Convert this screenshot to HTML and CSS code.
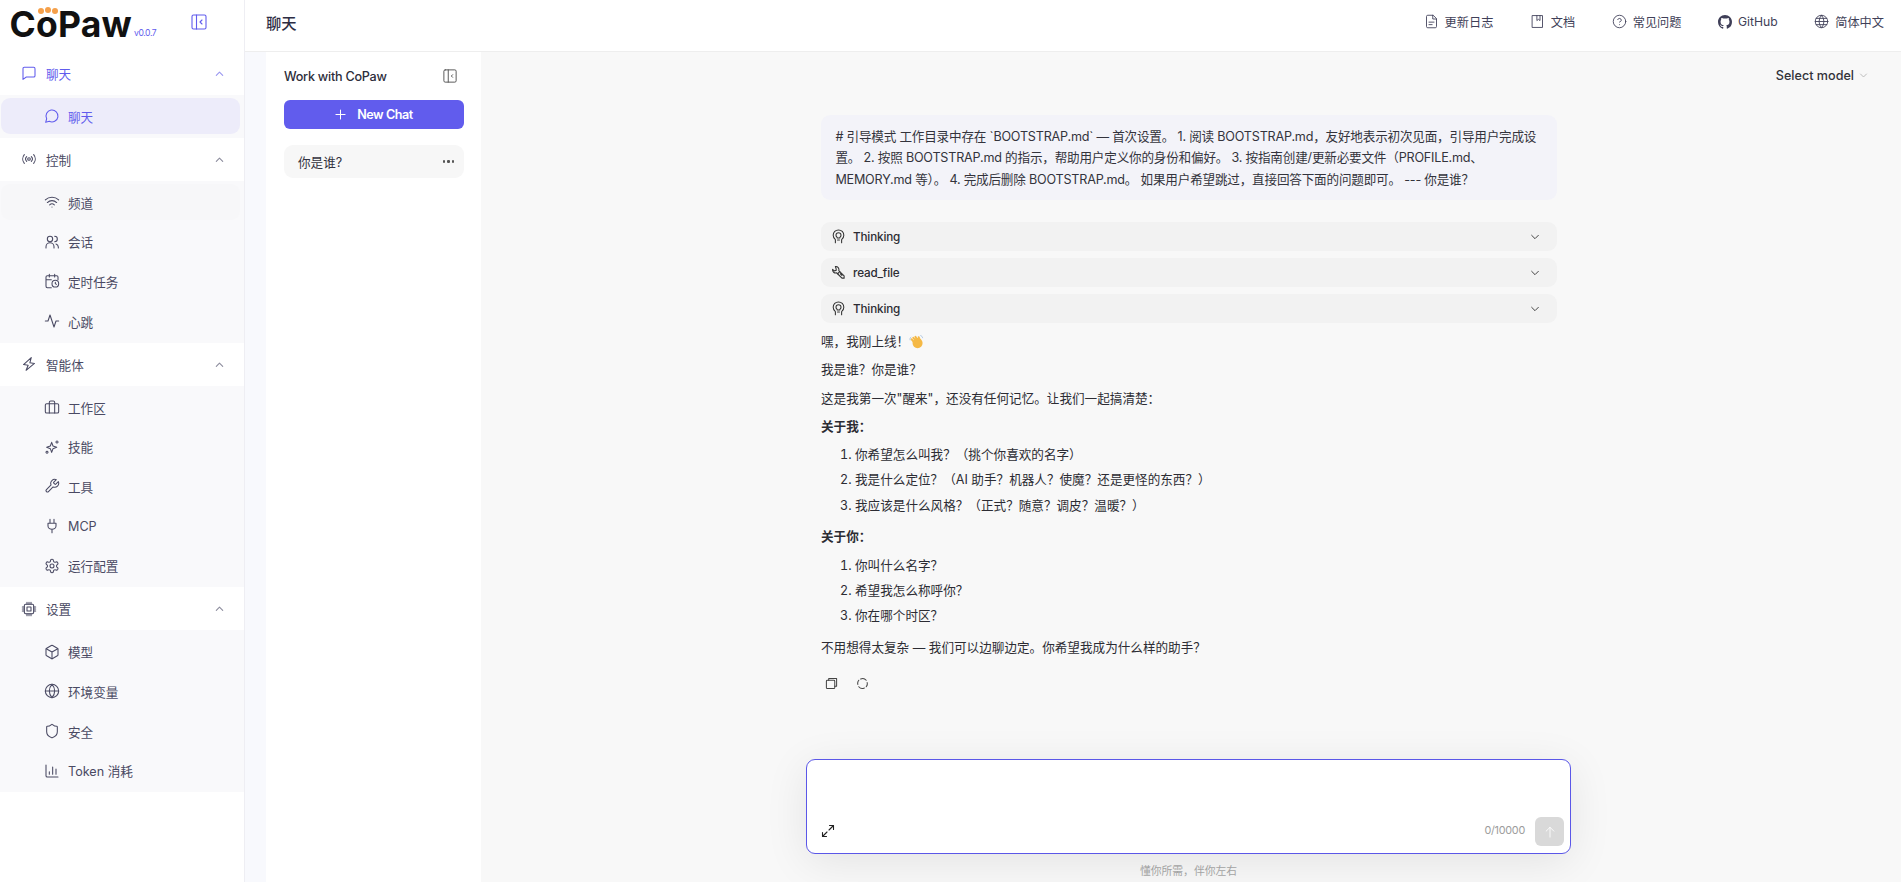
FILE: index.html
```html
<!DOCTYPE html>
<html lang="zh-CN">
<head>
    <meta charset="UTF-8">
    <meta name="viewport" content="width=device-width, initial-scale=1.0">
    <title>CoPaw</title>
    <link rel="stylesheet" href="styles.css">
</head>
<body>
    <div class="app">
        <aside class="sidebar">
            <div class="brand">
                <div class="logo">
                    <span class="logo-text">CoPaw</span>
                    <span class="paw"><i></i><i></i><i></i></span>
                </div>
                <span class="version">v0.0.7</span>
                <svg class="brand-toggle" viewBox="0 0 16 16"><rect x="1" y="1" width="14" height="14" rx="1.5"/><path d="M5.500 1v14M11 6 9 8l2 2"/></svg>
            </div>

            <div class="nav-head active">
                <svg class="ico" viewBox="0 0 24 24"><path d="M3 5.500A2 2 0 0 1 5 3.500h14a2 2 0 0 1 2 2V16a2 2 0 0 1-2 2H8l-5 3.500z"/></svg>
                <span>聊天</span>
                <svg class="chev" viewBox="0 0 12 12"><path d="M2.500 8 6 4.500 9.500 8"/></svg>
            </div>
            <div class="nav-list">
                <div class="nav-item selected">
                    <svg class="ico" viewBox="0 0 24 24"><path d="M7.900 20A9 9 0 1 0 4 16.100L2.500 21.500z"/></svg>
                    <span>聊天</span>
                </div>
            </div>

            <div class="nav-head">
                <svg class="ico" viewBox="0 0 24 24"><circle cx="12" cy="12" r="2"/><path d="M8.500 8.500a5 5 0 0 0 0 7M15.500 8.500a5 5 0 0 1 0 7M5 5.500a10 10 0 0 0 0 13M19 5.500a10 10 0 0 1 0 13"/></svg>
                <span>控制</span>
                <svg class="chev" viewBox="0 0 12 12"><path d="M2.500 8 6 4.500 9.500 8"/></svg>
            </div>
            <div class="nav-list">
                <div class="nav-item hovered">
                    <svg class="ico" viewBox="0 0 24 24"><path d="M12 19.500h.01M2 8.800a15 15 0 0 1 20 0M5 12.800a10 10 0 0 1 14 0M8.500 16.300a5 5 0 0 1 7 0"/></svg>
                    <span>频道</span>
                </div>
                <div class="nav-item">
                    <svg class="ico" viewBox="0 0 24 24"><circle cx="9" cy="7.500" r="4"/><path d="M3 21v-2a6 6 0 0 1 12 0v2M16 3.500a4 4 0 0 1 0 8M18 15a5 5 0 0 1 3.500 4.500V21"/></svg>
                    <span>会话</span>
                </div>
                <div class="nav-item">
                    <svg class="ico" viewBox="0 0 24 24"><path d="M21 10V6a2 2 0 0 0-2-2H5a2 2 0 0 0-2 2v14a2 2 0 0 0 2 2h6M8 2v4M16 2v4M3 10h8"/><circle cx="17" cy="16" r="5"/><path d="M17 14v2l1.500 1"/></svg>
                    <span>定时任务</span>
                </div>
                <div class="nav-item">
                    <svg class="ico" viewBox="0 0 24 24"><path d="M2 12h4l3-9 6 18 3-9h4"/></svg>
                    <span>心跳</span>
                </div>
            </div>

            <div class="nav-head">
                <svg class="ico" viewBox="0 0 24 24"><path d="M14 2 4 14h7l-2 8 11-12h-7l1-8z" transform="rotate(8 12 12)"/></svg>
                <span>智能体</span>
                <svg class="chev" viewBox="0 0 12 12"><path d="M2.500 8 6 4.500 9.500 8"/></svg>
            </div>
            <div class="nav-list">
                <div class="nav-item">
                    <svg class="ico" viewBox="0 0 24 24"><rect x="2" y="7" width="20" height="14" rx="2"/><path d="M8 21V5a2 2 0 0 1 2-2h4a2 2 0 0 1 2 2v16"/></svg>
                    <span>工作区</span>
                </div>
                <div class="nav-item">
                    <svg class="ico" viewBox="0 0 24 24"><path d="M11.500 5l2 5.500 5.500 2-5.500 2-2 5.500-2-5.500-5.500-2 5.500-2z"/><path d="M19.500 2.500v4M17.500 4.500h4M4.500 18.500a1.500 1.500 0 1 0 .01 0"/></svg>
                    <span>技能</span>
                </div>
                <div class="nav-item">
                    <svg class="ico" viewBox="0 0 24 24"><path d="M14.700 6.300a1 1 0 0 0 0 1.400l1.600 1.600a1 1 0 0 0 1.400 0l3.800-3.800a6 6 0 0 1-7.900 7.900l-6.900 6.900a2.100 2.100 0 0 1-3-3l6.900-6.900a6 6 0 0 1 7.900-7.900z"/></svg>
                    <span>工具</span>
                </div>
                <div class="nav-item">
                    <svg class="ico" viewBox="0 0 24 24"><path d="M9 2v6M15 2v6M12 17v5M6 8h12v4a6 5 0 0 1-12 0z"/></svg>
                    <span>MCP</span>
                </div>
                <div class="nav-item">
                    <svg class="ico" viewBox="0 0 24 24"><path d="M12.200 2h-.4a2 2 0 0 0-2 2v.2a2 2 0 0 1-1 1.700l-.4.300a2 2 0 0 1-2 0l-.2-.1a2 2 0 0 0-2.700.7l-.2.400a2 2 0 0 0 .7 2.700l.2.100a2 2 0 0 1 1 1.700v.6a2 2 0 0 1-1 1.700l-.2.100a2 2 0 0 0-.7 2.700l.2.400a2 2 0 0 0 2.700.7l.2-.1a2 2 0 0 1 2 0l.4.300a2 2 0 0 1 1 1.700v.2a2 2 0 0 0 2 2h.4a2 2 0 0 0 2-2v-.2a2 2 0 0 1 1-1.700l.4-.3a2 2 0 0 1 2 0l.2.100a2 2 0 0 0 2.700-.7l.2-.4a2 2 0 0 0-.7-2.700l-.2-.1a2 2 0 0 1-1-1.700v-.6a2 2 0 0 1 1-1.700l.2-.1a2 2 0 0 0 .7-2.700l-.2-.4a2 2 0 0 0-2.700-.7l-.2.100a2 2 0 0 1-2 0l-.4-.3a2 2 0 0 1-1-1.700V4a2 2 0 0 0-2-2z"/><circle cx="12" cy="12" r="3"/></svg>
                    <span>运行配置</span>
                </div>
            </div>

            <div class="nav-head">
                <svg class="ico" viewBox="0 0 24 24"><rect x="5" y="5" width="14" height="14" rx="2"/><rect x="9" y="9" width="6" height="6"/><path d="M9 2v3M15 2v3M9 19v3M15 19v3M2 9h3M2 15h3M19 9h3M19 15h3M12 2v3M12 19v3M2 12h3M19 12h3"/></svg>
                <span>设置</span>
                <svg class="chev" viewBox="0 0 12 12"><path d="M2.500 8 6 4.500 9.500 8"/></svg>
            </div>
            <div class="nav-list">
                <div class="nav-item">
                    <svg class="ico" viewBox="0 0 24 24"><path d="M21 8a2 2 0 0 0-1-1.700l-7-4a2 2 0 0 0-2 0l-7 4A2 2 0 0 0 3 8v8a2 2 0 0 0 1 1.700l7 4a2 2 0 0 0 2 0l7-4a2 2 0 0 0 1-1.700z"/><path d="M3.300 7 12 12l8.700-5M12 22V12"/></svg>
                    <span>模型</span>
                </div>
                <div class="nav-item">
                    <svg class="ico" viewBox="0 0 24 24"><circle cx="12" cy="12" r="10"/><path d="M2 12h20M12 2a14.500 14.500 0 0 0 0 20 14.500 14.500 0 0 0 0-20"/></svg>
                    <span>环境变量</span>
                </div>
                <div class="nav-item">
                    <svg class="ico" viewBox="0 0 24 24"><path d="M20 13c0 5-3.500 7.500-7.700 9a1 1 0 0 1-.6 0C7.500 20.500 4 18 4 13V6a1 1 0 0 1 1-1c2 0 4.500-1.200 6.200-2.700a1.200 1.200 0 0 1 1.600 0C14.500 3.800 17 5 19 5a1 1 0 0 1 1 1z"/></svg>
                    <span>安全</span>
                </div>
                <div class="nav-item">
                    <svg class="ico" viewBox="0 0 24 24"><path d="M3 3v16a2 2 0 0 0 2 2h16M8 17v-4M13 17V6M18 17V9"/></svg>
                    <span>Token 消耗</span>
                </div>
            </div>
        </aside>

        <div class="page">
            <header class="topbar">
                <div class="page-title">聊天</div>
                <nav class="top-links">
                    <a class="top-link">
                        <svg class="top-ico" viewBox="0 0 24 24"><path d="M14 2H6a2 2 0 0 0-2 2v16a2 2 0 0 0 2 2h12a2 2 0 0 0 2-2V8zM14 2v6h6M8 13h8M8 17h5"/></svg>
                        <span>更新日志</span>
                    </a>
                    <a class="top-link">
                        <svg class="top-ico" viewBox="0 0 24 24"><path d="M4 2.500h16v19H4zM11 2.500v8l2.500-2 2.500 2v-8"/></svg>
                        <span>文档</span>
                    </a>
                    <a class="top-link">
                        <svg class="top-ico" viewBox="0 0 24 24"><circle cx="12" cy="12" r="10"/><path d="M9.100 9a3 3 0 0 1 5.800 1c0 2-3 3-3 3M12 17h.01"/></svg>
                        <span>常见问题</span>
                    </a>
                    <a class="top-link">
                        <svg class="top-ico solid" viewBox="0 0 16 16"><path d="M8 0C3.580 0 0 3.580 0 8c0 3.540 2.290 6.530 5.470 7.590.4.070.55-.17.55-.38 0-.19-.01-.82-.01-1.490-2.010.37-2.530-.49-2.690-.94-.09-.23-.48-.94-.82-1.130-.28-.15-.68-.52-.01-.53.630-.01 1.080.58 1.230.82.720 1.210 1.870.870 2.330.660.070-.520.280-.870.510-1.070-1.780-.200-3.640-.890-3.640-3.950 0-.870.310-1.590.820-2.150-.080-.200-.360-1.020.080-2.120 0 0 .670-.210 2.200.820.640-.180 1.320-.270 2-.270s1.360.090 2 .270c1.530-1.040 2.200-.820 2.200-.820.440 1.100.160 1.920.080 2.120.510.560.820 1.270.820 2.150 0 3.070-1.870 3.750-3.650 3.950.290.250.540.730.540 1.480 0 1.070-.010 1.930-.010 2.200 0 .210.150.460.550.380A8.010 8.010 0 0 0 16 8c0-4.420-3.580-8-8-8z"/></svg>
                        <span>GitHub</span>
                    </a>
                    <a class="top-link">
                        <svg class="top-ico" viewBox="0 0 24 24"><circle cx="12" cy="12" r="10"/><path d="M2 12h20M3.500 7h17M3.500 17h17M12 2a14.500 14.500 0 0 0 0 20 14.500 14.500 0 0 0 0-20"/></svg>
                        <span>简体中文</span>
                    </a>
                </nav>
            </header>

            <div class="content">
                <section class="sessions">
                    <div class="sessions-head">
                        <span>Work with CoPaw</span>
                        <svg class="sessions-toggle" viewBox="0 0 16 16"><rect x="1" y="1" width="14" height="14" rx="1.500"/><path d="M6 1v14M11 6.500 9.500 8l1.500 1.500"/></svg>
                    </div>
                    <button class="new-chat">
                        <svg viewBox="0 0 12 12"><path d="M6 1v10M1 6h10"/></svg>
                        <span>New Chat</span>
                    </button>
                    <div class="session-item">
                        <span>你是谁?</span>
                        <span class="dots"><i></i><i></i><i></i></span>
                    </div>
                </section>

                <main class="chat">
                    <div class="model-select">
                        <span>Select model</span>
                        <svg viewBox="0 0 12 12"><path d="M2 4l4 4 4-4"/></svg>
                    </div>

                    <div class="thread">
                        <div class="user-msg"># 引导模式 工作目录中存在 `BOOTSTRAP.md` — 首次设置。 1. 阅读 BOOTSTRAP.md，友好地表示初次见面，引导用户完成设置。 2. 按照 BOOTSTRAP.md 的指示，帮助用户定义你的身份和偏好。 3. 按指南创建/更新必要文件（PROFILE.md、MEMORY.md 等）。 4. 完成后删除 BOOTSTRAP.md。 如果用户希望跳过，直接回答下面的问题即可。 --- 你是谁？</div>

                        <div class="fold">
                            <svg class="fold-ico" viewBox="0 0 24 24"><path d="M7 22v-5C4.500 15 3.500 12.500 3.500 10a8.500 8.500 0 0 1 17 0c0 3-1.500 5.500-3.500 7v5"/><path d="M9.500 13a4 4 0 1 1 5 0c-.5.500-.5 1-.5 1.500h-4c0-.5 0-1-.5-1.500zM10.500 17.500h3"/></svg>
                            <span>Thinking</span>
                            <svg class="fold-chev" viewBox="0 0 12 12"><path d="M2 4l4 4 4-4"/></svg>
                        </div>
                        <div class="fold">
                            <svg class="fold-ico" viewBox="0 0 24 24"><path d="M7 2.500a5 5 0 0 1 5.500 6.500l1.500 1.500-3.500 3.500L9 12.500A5 5 0 0 1 2.500 7l3 2.500 3-1-.5-3z"/><path d="M14 10.500l7 7v3.500h-3.500l-7-7M15 14l2.500 2.500"/></svg>
                            <span>read_file</span>
                            <svg class="fold-chev" viewBox="0 0 12 12"><path d="M2 4l4 4 4-4"/></svg>
                        </div>
                        <div class="fold">
                            <svg class="fold-ico" viewBox="0 0 24 24"><path d="M7 22v-5C4.500 15 3.500 12.500 3.500 10a8.500 8.500 0 0 1 17 0c0 3-1.500 5.500-3.500 7v5"/><path d="M9.500 13a4 4 0 1 1 5 0c-.5.500-.5 1-.5 1.500h-4c0-.5 0-1-.5-1.500zM10.500 17.500h3"/></svg>
                            <span>Thinking</span>
                            <svg class="fold-chev" viewBox="0 0 12 12"><path d="M2 4l4 4 4-4"/></svg>
                        </div>

                        <div class="answer">
                            <p>嘿，我刚上线！<svg class="wave" viewBox="0 0 14 14"><g class="wave-hand"><circle cx="8" cy="8.500" r="3.800"/><path d="M5 8 2.500 5M6.500 6.500 4 3.500M8 5.500 6 2.500M10 5.500 9 3"/></g><path class="wave-line" d="M1 5.500C.8 4.500 1 3.500 1.700 3M11 1.500c.8.300 1.500 1 1.700 2"/></svg></p>
                            <p>我是谁？你是谁？</p>
                            <p>这是我第一次"醒来"，还没有任何记忆。让我们一起搞清楚：</p>
                            <p><strong>关于我：</strong></p>
                            <ol>
                                <li>你希望怎么叫我？（挑个你喜欢的名字）</li>
                                <li>我是什么定位？（AI 助手？机器人？使魔？还是更怪的东西？）</li>
                                <li>我应该是什么风格？（正式？随意？调皮？温暖？）</li>
                            </ol>
                            <p><strong>关于你：</strong></p>
                            <ol>
                                <li>你叫什么名字？</li>
                                <li>希望我怎么称呼你？</li>
                                <li>你在哪个时区？</li>
                            </ol>
                            <p>不用想得太复杂 — 我们可以边聊边定。你希望我成为什么样的助手？</p>
                        </div>

                        <div class="msg-actions">
                            <svg viewBox="0 0 14 14"><rect x="1.500" y="3.500" width="9" height="9" rx="1"/><path d="M4 3.500V1.500h8.500v8.500h-2"/></svg>
                            <svg viewBox="0 0 14 14"><path d="M2 8a5 5 0 0 1 1-4.500M5 2.200a5 5 0 0 1 6 1.300M12 6a5 5 0 0 1-1 4.500M9 11.800a5 5 0 0 1-6-1.300"/></svg>
                        </div>
                    </div>

                    <div class="composer-wrap">
                        <div class="composer">
                            <svg class="expand" viewBox="0 0 14 14"><path d="M8 6l4.500-4.500M8.500 1.500h4v4M6 8l-4.500 4.500M1.500 8.500v4h4"/></svg>
                            <span class="counter">0/10000</span>
                            <button class="send">
                                <svg viewBox="0 0 14 14"><path d="M7 13V1.500M2.500 6 7 1.500 11.500 6"/></svg>
                            </button>
                        </div>
                        <div class="tagline">懂你所需，伴你左右</div>
                    </div>
                </main>
            </div>
        </div>
    </div>
</body>
</html>
```

FILE: styles.css
```css
* {
    box-sizing: border-box;
}
body {
    margin: 0;
    font-family: Inter, "Noto Sans CJK SC", sans-serif;
    font-size: 12.6px;
    color: #1f1f33;
    background-color: #fff;
}
svg {
    fill: none;
    stroke: currentColor;
    stroke-linecap: round;
    stroke-linejoin: round;
    flex-shrink: 0;
}
.app {
    display: flex;
    height: 882px;
    overflow: hidden;
}

/* sidebar */
.sidebar {
    width: 245px;
    flex-shrink: 0;
    border-right: 1px solid #eeeef3;
    background-color: #fff;
}
.brand {
    position: relative;
    height: 51.5px;
}
.logo {
    position: absolute;
    left: 9.500px;
    top: 2px;
}
.logo-text {
    font-family: Inter, sans-serif;
    font-size: 35.5px;
    font-weight: 700;
    letter-spacing: .2px;
    line-height: 46px;
    color: #111;
}
.paw {
    position: absolute;
    left: 28.500px;
    top: 6px;
    display: flex;
    gap: 1px;
}
.paw i {
    width: 6px;
    height: 6px;
    border-radius: 50%;
    background-color: #f5a04a;
}
.paw i:nth-child(2) {
    margin-top: -1.5px;
}
.version {
    position: absolute;
    left: 134px;
    top: 28px;
    font-size: 8.6px;
    letter-spacing: -.4px;
    color: #615ced;
}
.brand-toggle {
    position: absolute;
    left: 190.500px;
    top: 14px;
    width: 16px;
    height: 16px;
    stroke: #615ced;
    stroke-width: 1.1;
}
.nav-head {
    display: flex;
    align-items: center;
    height: 43px;
    padding: 0 19px 0 21px;
    color: #4a4a63;
}
.nav-head .ico {
    margin-right: 9px;
}
.nav-head span {
    flex: 1;
}
.nav-head.active {
    color: #615ced;
}
.chev {
    width: 11px;
    height: 11px;
    stroke: #8d8d9e;
    stroke-width: 1.2;
}
.nav-head.active .chev {
    stroke: #9a97f0;
}
.ico {
    width: 16px;
    height: 16px;
    stroke-width: 1.6;
}
.nav-list {
    display: flex;
    flex-direction: column;
    gap: 3.6px;
    padding: 3.6px 4px 3.6px 1px;
    background-color: #f9f9fb;
}
.nav-item {
    display: flex;
    align-items: center;
    gap: 8px;
    height: 36px;
    padding-left: 43px;
    border-radius: 9px;
    color: #4a4a63;
}
.nav-item.selected {
    background-color: #edecfa;
    color: #615ced;
}
.nav-item.hovered {
    background-color: #f7f7f9;
}

/* top bar */
.page {
    flex: 1;
    display: flex;
    flex-direction: column;
    min-width: 0;
}
.topbar {
    display: flex;
    align-items: center;
    justify-content: space-between;
    height: 52px;
    flex-shrink: 0;
    padding: 0 17px 8px 21px;
    border-bottom: 1px solid #eeeeee;
    background-color: #fff;
}
.page-title {
    font-size: 15.3px;
    font-weight: 500;
    color: #2d2d44;
}
.top-links {
    display: flex;
    gap: 36.5px;
}
.top-link {
    display: flex;
    align-items: center;
    gap: 6px;
    font-size: 12.2px;
    color: #3f3f58;
}
.top-ico {
    width: 15px;
    height: 15px;
    stroke-width: 1.4;
}
.top-ico.solid {
    width: 14px;
    height: 14px;
    fill: currentColor;
    stroke: none;
}

/* session list */
.content {
    flex: 1;
    display: flex;
    min-height: 0;
    padding-left: 21px;
    background-color: #f8f9fd;
}
.sessions {
    width: 215px;
    flex-shrink: 0;
    padding: 0 17px 0 18px;
    background-color: #fff;
}
.sessions-head {
    display: flex;
    align-items: center;
    justify-content: space-between;
    height: 48px;
    font-weight: 500;
    letter-spacing: -.25px;
    color: #2d2d3a;
}
.sessions-toggle {
    width: 14px;
    height: 14px;
    margin-right: 7px;
    stroke: #555;
    stroke-width: 1.1;
}
.new-chat {
    display: flex;
    align-items: center;
    justify-content: center;
    gap: 11px;
    width: 100%;
    height: 29px;
    border: 0;
    border-radius: 6px;
    background-color: #615ced;
    color: #fff;
    font-family: inherit;
    font-size: 12.6px;
    font-weight: 600;
    letter-spacing: -.45px;
}
.new-chat svg {
    width: 11px;
    height: 11px;
    stroke-width: 1.1;
}
.session-item {
    display: flex;
    align-items: center;
    justify-content: space-between;
    height: 33px;
    margin-top: 16px;
    padding: 0 10px 0 14px;
    border-radius: 9px;
    background-color: #f7f7f7;
    color: #33333f;
}
.dots {
    display: flex;
    gap: 2.3px;
}
.dots i {
    width: 2.2px;
    height: 2.2px;
    border-radius: 50%;
    background-color: #555;
}

/* chat area */
.chat {
    position: relative;
    flex: 1;
    min-width: 0;
    background-color: #f8f8f8;
}
.model-select {
    position: absolute;
    top: 16px;
    right: 33px;
    display: flex;
    align-items: center;
    gap: 5px;
    font-weight: 500;
    color: #33333a;
}
.model-select svg {
    width: 9px;
    height: 9px;
    stroke: #aaa;
}
.thread {
    width: 736px;
    margin-left: 340px;
    padding-top: 63px;
    color: #2c2c33;
}
.user-msg {
    height: 85px;
    padding: 11px 14.4px;
    margin-bottom: 22px;
    border-radius: 9px;
    background-color: #f3f3f9;
    line-height: 21.4px;
    letter-spacing: -.2px;
    color: #33333c;
}
.fold {
    display: flex;
    align-items: center;
    height: 29px;
    margin-bottom: 7px;
    padding: 0 17px 0 10px;
    border-radius: 9px;
    background-color: #f2f2f2;
    font-weight: 500;
    font-size: 11.7px;
    letter-spacing: -.15px;
}
.fold span {
    flex: 1;
    margin-left: 7px;
}
.fold-ico {
    width: 15px;
    height: 15px;
    stroke-width: 1.7;
    color: #333;
}
.fold-chev {
    width: 10px;
    height: 10px;
    stroke: #444;
    stroke-width: 1.2;
}
.answer {
    margin-top: 8px;
    line-height: 21.4px;
}
.answer p {
    margin: 0 0 6.9px;
}
.answer strong {
    font-weight: 700;
}
.answer ol {
    margin: 2px 0 10.2px;
    padding-left: 34px;
}
.answer li {
    margin-bottom: 3.9px;
}
.wave {
    width: 15px;
    height: 15px;
    vertical-align: -3px;
}
.wave-hand {
    fill: #f5b946;
    stroke: #f5b946;
    stroke-width: 1.8;
}
.wave-line {
    stroke: #a9c4e0;
    stroke-width: .9;
}
.msg-actions {
    display: flex;
    gap: 18px;
    margin-top: 19px;
    padding-left: 4px;
}
.msg-actions svg {
    width: 13px;
    height: 13px;
    stroke: #444;
    stroke-width: 1.1;
}

/* composer */
.composer-wrap {
    position: absolute;
    left: 325px;
    top: 707px;
    width: 765px;
}
.composer {
    position: relative;
    height: 95px;
    border: 1px solid #5b57e8;
    border-radius: 9px;
    background-color: #fff;
    box-shadow: 0 8px 44px rgba(0, 0, 0, 0.085);
}
.expand {
    position: absolute;
    left: 14px;
    top: 64px;
    width: 14px;
    height: 14px;
    stroke: #222;
    stroke-width: 1.1;
}
.counter {
    position: absolute;
    right: 45px;
    top: 64px;
    font-size: 10.8px;
    letter-spacing: -.25px;
    color: #9c9c9c;
}
.send {
    position: absolute;
    right: 6px;
    top: 57px;
    display: flex;
    align-items: center;
    justify-content: center;
    width: 29px;
    height: 29px;
    padding: 0;
    border: 0;
    border-radius: 6px;
    background-color: #d9d9d9;
    color: #fff;
}
.send svg {
    width: 12px;
    height: 12px;
    stroke-width: 1;
}
.tagline {
    margin-top: 8px;
    text-align: center;
    font-size: 10.8px;
    color: #a8a8a8;
}
```
